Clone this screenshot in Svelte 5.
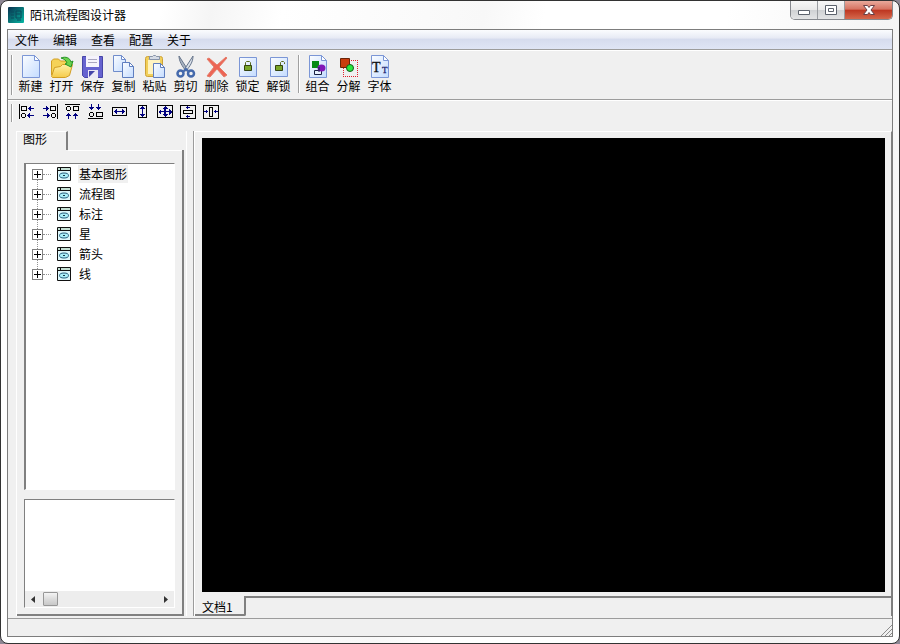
<script lang="ts">
	type Tool = { icon: string; label: string };

	const menus = ['文件', '编辑', '查看', '配置', '关于'];

	const editTools: Tool[] = [
		{ icon: 'new', label: '新建' },
		{ icon: 'open', label: '打开' },
		{ icon: 'save', label: '保存' },
		{ icon: 'copy', label: '复制' },
		{ icon: 'paste', label: '粘贴' },
		{ icon: 'cut', label: '剪切' },
		{ icon: 'delete', label: '删除' },
		{ icon: 'lock', label: '锁定' },
		{ icon: 'unlock', label: '解锁' }
	];
	const shapeTools: Tool[] = [
		{ icon: 'group', label: '组合' },
		{ icon: 'ungroup', label: '分解' },
		{ icon: 'font', label: '字体' }
	];
	const alignTools: Tool[] = [
		{ icon: 'left', label: '左对齐' },
		{ icon: 'right', label: '右对齐' },
		{ icon: 'top', label: '顶端对齐' },
		{ icon: 'bottom', label: '底端对齐' },
		{ icon: 'width', label: '等宽' },
		{ icon: 'height', label: '等高' },
		{ icon: 'size', label: '等大小' },
		{ icon: 'middle', label: '垂直居中' },
		{ icon: 'center', label: '水平居中' }
	];

	const categories = ['基本图形', '流程图', '标注', '星', '箭头', '线'];
	let selected = $state('基本图形');
</script>

{#snippet toolButton(tool: Tool)}
	<button class="tool">
		<svg width="24" height="24" viewBox="0 0 24 24" aria-hidden="true">
			{#if tool.icon === 'new'}
				<path d="M3.5 .5h12l5 5v17h-17z" fill="url(#paper)" stroke="#7b96d6" />
				<path d="M15.5 .5v5h5z" fill="#fff" stroke="#7b96d6" />
			{:else if tool.icon === 'open'}
				<path d="M1.5 20V6l2-2h5l2 2h6l2 2v4" fill="#f5d257" stroke="#d29e23" />
				<path d="M1.5 21.5l3-9 6-1 2-2h10l-3 11-4 2h-13z" fill="url(#folder)" stroke="#d29e23" />
				<path d="M11 3c5-2 9 0 10 4l2-1-2 6-6-3 2-1c-1-3-3-4-6-5z" fill="#6bd24c" stroke="#249326" />
			{:else if tool.icon === 'save'}
				<path d="M1.5 1.5h20v21h-18l-2-2z" fill="#6663cf" stroke="#4746a8" />
				<path d="M5 1h13v11H5z" fill="#f5f3fc" />
				<path d="M7 4.5h9M7 7.5h9" stroke="#aaa6c0" />
				<path d="M7 15h10v8H7z" fill="#ece9f4" />
				<path d="M8 22v-6h6z" fill="#4545a8" />
			{:else if tool.icon === 'copy'}
				<path d="M1.5 .5h8l4 4v12h-12z" fill="url(#paper)" stroke="#6f8ccb" />
				<path d="M9.5 .5v4h4z" fill="#fff" stroke="#6f8ccb" />
				<path d="M10.5 7.5h7l4 4v11h-11z" fill="url(#paper)" stroke="#5f7ebf" />
				<path d="M17.5 7.5v4h4z" fill="#fff" stroke="#5f7ebf" />
			{:else if tool.icon === 'paste'}
				<rect x="2.5" y="1.5" width="17" height="20" rx="2" fill="#f1cf59" stroke="#cda238" />
				<path d="M5 5h12v14H5z" fill="#fff3c0" />
				<path d="M6.5 4.5v-3h3l1-1h2l1 1h3v3z" fill="#d5dbe5" stroke="#8794ab" />
				<path d="M10.5 8.5h7l4 4v10h-11z" fill="url(#paper)" stroke="#5f7ebf" />
				<path d="M17.5 8.5v4h4z" fill="#fff" stroke="#5f7ebf" />
			{:else if tool.icon === 'cut'}
				<path d="M5 1l9 14-2 1C8 11 5 6 5 1z" fill="#a8b3c2" stroke="#66758b" />
				<path d="M19 1l-9 14 2 1c4-5 7-9 7-15z" fill="#d9e0e9" stroke="#66758b" />
				<circle cx="6.5" cy="18.5" r="3" fill="none" stroke="#456aac" stroke-width="2.5" />
				<circle cx="17" cy="18.5" r="3" fill="none" stroke="#456aac" stroke-width="2.5" />
				<path d="M9 17l3-3 3 3" fill="none" stroke="#456aac" stroke-width="2" />
			{:else if tool.icon === 'delete'}
				<path d="M2 4l2-1 8 7 9-8 1 1-8 9 8 8-3 2-7-8-7 8-3-1 7-9z" fill="#ed6454" stroke="#e47e6b" />
			{:else if tool.icon === 'lock' || tool.icon === 'unlock'}
				<path d="M3.5 2.5h17v19h-17z" fill="url(#paper)" stroke="#7b96d6" />
				<path d="M8.5 10.5h7v5h-7z" fill="#78a62b" stroke="#344411" />
				{#if tool.icon === 'lock'}
					<path d="M9.5 10V7.5l1-1h3l1 1V10" fill="none" stroke="#5d6d22" />
				{:else}
					<path d="M13.5 10V7.5l1-1h2l1 1V9" fill="none" stroke="#5d6d22" />
				{/if}
			{:else if tool.icon === 'group'}
				<path d="M3.5 .5h12l5 5v17h-17z" fill="url(#paper)" stroke="#7b96d6" />
				<path d="M15.5 .5v5h5z" fill="#fff" stroke="#7b96d6" />
				<path d="M8.5 15.5h7v4h-7z" fill="#e8f1ff" stroke="#182043" />
				<path d="M6 6h7v7H6z" fill="#078a16" />
				<ellipse cx="15.5" cy="13" rx="4" ry="3.5" fill="#8118b6" />
				<path d="M13 12v5" stroke="#182043" />
			{:else if tool.icon === 'ungroup'}
				<path d="M6 5.5h15M6 21.5h15M6.5 5v17M20.5 5v17" fill="none" stroke="#e0202c" stroke-dasharray="1 1" shape-rendering="crispEdges" />
				<path d="M3.5 3.5h9v9h-9z" fill="#c93d0e" stroke="#692408" />
				<circle cx="13" cy="13" r="3.5" fill="#29e83e" stroke="#125a1a" />
			{:else}
				<path d="M3.5 .5h12l5 5v17h-17z" fill="url(#paper)" stroke="#7b96d6" />
				<path d="M15.5 .5v5h5z" fill="#fff" stroke="#7b96d6" />
				<text x="4" y="17" class="glyph big">T</text>
				<text x="14" y="18" class="glyph">T</text>
			{/if}
		</svg>
		<span>{tool.label}</span>
	</button>
{/snippet}

{#snippet alignButton(tool: Tool)}
	<button class="align" title={tool.label} aria-label={tool.label}>
		<svg width="16" height="16" viewBox="0 0 16 16" shape-rendering="crispEdges" aria-hidden="true">
			{#if tool.icon === 'left'}
				<path class="ink" d="M.5 0v15M2.5 2.5h5v4h-5zM3.5 9.5h2l1 1v2l-1 1h-2l-1-1v-2z" />
				<path class="navy" d="M9 4h1V3h1V2h1v2h3v1h-3v2h-1V6h-1V5H9zM8 11h1v-1h1V9h1v2h4v1h-4v2h-1v-1H9v-1H8z" />
			{:else if tool.icon === 'right'}
				<path class="ink" d="M15.5 0v15M8.5 2.5h5v4h-5zM10.5 9.5h2l1 1v2l-1 1h-2l-1-1v-2z" />
				<path class="navy" d="M7 4H6V3H5V2H4v2H1v1h3v2h1V6h1V5h1zM8 11H7v-1H6V9H5v2H1v1h4v2h1v-1h1v-1h1z" />
			{:else if tool.icon === 'top'}
				<path class="ink" d="M0 .5h15M8.5 2.5h5v4h-5zM2.5 2.5h2l1 1v2l-1 1h-2l-1-1v-2z" />
				<path class="navy" d="M3 9h1v1h1v1h1v1H4v3H3v-3H1v-1h1v-1h1zM10 9h1v1h1v1h1v1h-2v3h-1v-3H8v-1h1v-1h1z" />
			{:else if tool.icon === 'bottom'}
				<path class="ink" d="M0 14.5h15M8.5 8.5h6v4h-6zM2.5 8.5h2l1 1v2l-1 1h-2l-1-1v-2z" />
				<path class="navy" d="M3 0h1v3h2v1H5v1H4v1H3V5H2V4H1V3h2zM10 0h1v3h2v1h-1v1h-1v1h-1V5H9V4H8V3h2z" />
			{:else if tool.icon === 'width'}
				<path class="ink" d="M1.5 3.5h14v8h-14z" />
				<path class="navy" d="M3 7h1V6h1V5h1v2h5V5h1v1h1v1h1v1h-1v1h-1v1h-1V8H6v2H5V9H4V8H3z" />
			{:else if tool.icon === 'height'}
				<path class="ink" d="M4.5 1.5h8v12h-8z" />
				<path class="navy" d="M8 2h1v1h1v1h1v1H9v5h2v1h-1v1H9v1H8v-1H7v-1H6v-1h2V5H6V4h1V3h1z" />
			{:else if tool.icon === 'size'}
				<path class="ink" d="M.5 1.5h15v12H.5z" />
				<path class="navy" d="M8 2l3 3H9v2h3V5l3 3-3 3V8H9v2h2l-3 3-3-3h2V8H4v3L1 8l3-3v2h3V5H5z" />
			{:else if tool.icon === 'middle'}
				<path class="ink" d="M.5 1.5h15v13H.5zM3.5 6.5h9v3h-9z" />
				<path class="navy" d="M7 2h1v1h2v1H8v1H7V4H6V3h1zM7 11h1v1h2v1H8v1H7v-1H6v-1h1z" />
			{:else}
				<path class="ink" d="M.5 1.5h15v13H.5zM6.5 3.5h3v9h-3z" />
				<path class="navy" d="M1 7h2V6h1v1h1v1H4v1H3V8H1zM15 7h-2V6h-1v1h-1v1h1v1h1V8h2z" />
			{/if}
		</svg>
	</button>
{/snippet}

<svg class="defs" width="0" height="0" aria-hidden="true">
	<defs>
		<linearGradient id="paper" x1="0" y1="0" x2="1" y2="1">
			<stop offset="0" stop-color="#fbfdff" />
			<stop offset="1" stop-color="#c4dcff" />
		</linearGradient>
		<linearGradient id="folder" x1="0" y1="0" x2="0" y2="1">
			<stop offset="0" stop-color="#fff0a4" />
			<stop offset="1" stop-color="#f5cb4a" />
		</linearGradient>
		<linearGradient id="logo" x1="0" y1="0" x2="1" y2="1">
			<stop offset="0" stop-color="#092f50" />
			<stop offset="0.5" stop-color="#087577" />
			<stop offset="1" stop-color="#06b7a5" />
		</linearGradient>
	</defs>
</svg>

<div class="window">
	<header class="titlebar">
		<svg width="16" height="16" viewBox="0 0 16 16" aria-hidden="true">
			<rect width="16" height="16" rx="1" fill="url(#logo)" />
			<path d="M3 5h3M3 8h3M3 11h3M8 4h5v7H8zM8 7h4M9 13h4" fill="none" stroke="#0a4a5c" />
		</svg>
		<h1>陌讯流程图设计器</h1>
		<div class="controls">
			<button class="min" aria-label="最小化">
				<svg width="14" height="12" viewBox="0 0 14 12"><path d="M1.5 6.5h11v4h-11z" fill="#fff" stroke="#5c626c" /></svg>
			</button>
			<button class="max" aria-label="最大化">
				<svg width="14" height="12" viewBox="0 0 14 12"><path d="M1.5 1.5h11v9h-11zM4.5 4.5h5v3h-5z" fill="#fff" stroke="#5c626c" /></svg>
			</button>
			<button class="close" aria-label="关闭">
				<svg width="14" height="12" viewBox="0 0 14 12"><path d="M1.5 1.5h4L7 3.5l1.5-2h4L9 6l3.5 4.5h-4L7 8.5l-1.5 2h-4L5 6z" fill="#fff" stroke="#6a4146" /></svg>
			</button>
		</div>
	</header>

	<div class="client">
		<nav class="menubar">
			{#each menus as menu}
				<button>{menu}</button>
			{/each}
		</nav>

		<div class="toolbar main-tools">
			<span class="grip"></span>
			{#each editTools as tool}
				{@render toolButton(tool)}
			{/each}
			<span class="separator"></span>
			{#each shapeTools as tool}
				{@render toolButton(tool)}
			{/each}
		</div>

		<div class="toolbar align-tools">
			<span class="grip"></span>
			{#each alignTools as tool}
				{@render alignButton(tool)}
			{/each}
		</div>

		<div class="workspace">
			<aside class="sidebar">
				<div class="side-tabs">
					<button class="side-tab">图形</button>
				</div>
				<div class="side-panel">
					<ul class="tree">
						{#each categories as name (name)}
							<li>
								<button class="expander" aria-label="展开 {name}"></button>
								<span class="branch"></span>
								<svg width="14" height="14" viewBox="0 0 14 14" aria-hidden="true">
									<path d="M.5 .5h13v13H.5z" fill="#ddf8fc" stroke="#111" />
									<path d="M1 1h12v2H1z" fill="#c4e0d4" />
									<path d="M1 3.5h12M3.5 1v2" stroke="#111" />
									<ellipse cx="7" cy="8.5" rx="4.5" ry="2.5" fill="#aaf0fa" stroke="#235d7c" />
									<path d="M6 8.5h2" stroke="#173448" />
								</svg>
								<button class="node" class:selected={selected === name} onclick={() => (selected = name)}>{name}</button>
							</li>
						{/each}
					</ul>
					<div class="preview">
						<div class="preview-body"></div>
						<div class="scrollbar">
							<button class="arrow" aria-label="向左滚动"><svg width="5" height="7" viewBox="0 0 5 7"><path d="M4 0v7L0 3.5z" fill="#333" /></svg></button>
							<span class="thumb"></span>
							<button class="arrow next" aria-label="向右滚动"><svg width="5" height="7" viewBox="0 0 5 7"><path d="M1 0v7l4-3.5z" fill="#333" /></svg></button>
						</div>
					</div>
				</div>
			</aside>

			<div class="splitter"></div>

			<main class="document">
				<div class="canvas"></div>
				<div class="doc-tabs">
					<button class="doc-tab">文档1</button>
					<span class="tab-rest"></span>
				</div>
			</main>
		</div>

		<footer class="statusbar">
			<svg width="12" height="12" viewBox="0 0 12 12" aria-hidden="true">
				<path d="M1 12L12 1M5 12l7-7M9 12l3-3" stroke="#8c8c8c" />
			</svg>
		</footer>
	</div>
</div>

<style>
	:global(body) {
		margin: 0;
		background: #8d8794;
	}
	.window, .window * {
		box-sizing: border-box;
	}
	.defs {
		position: absolute;
	}
	.window {
		height: 100vh;
		display: flex;
		flex-direction: column;
		padding: 0 6px 6px;
		border: 1px solid #333;
		border-radius: 8px;
		background: linear-gradient(100deg, #fff 0, #fff 16%, #f5f5f5 21%, #fff 28%, #f8f8f8 48%, #fff 54%, #fff 72%, #f4f4f4 88%, #fff 100%);
		font: 12px/14px "Noto Sans CJK SC", sans-serif;
		color: #000;
	}
	button {
		padding: 0;
		border: 0;
		background: none;
		font: inherit;
		color: inherit;
	}
	svg {
		display: block;
		flex: none;
	}

	/* title bar */
	.titlebar {
		display: flex;
		align-items: center;
		height: 28px;
		flex: none;
		padding-left: 1px;
	}
	h1 {
		margin: 0 0 0 6px;
		font-size: 12px;
		font-weight: 400;
		line-height: 16px;
	}
	.controls {
		display: flex;
		align-self: flex-start;
		margin-left: auto;
		height: 19px;
		border: 1px solid #85888d;
		border-top: 0;
		border-radius: 0 0 5px 5px;
		overflow: hidden;
	}
	.controls button {
		display: flex;
		align-items: center;
		justify-content: center;
		width: 27px;
		background: linear-gradient(#f7f7f7 0, #e9e9e9 48%, #cfd1d3 50%, #e3e4e5 100%);
		border-right: 1px solid #9a9da1;
	}
	.controls .close {
		width: 47px;
		border-right: 0;
		background: linear-gradient(#e9a99b 0, #d67361 46%, #bd3520 50%, #d5694d 100%);
	}

	.client {
		flex: 1;
		min-height: 0;
		display: flex;
		flex-direction: column;
		border: 1px solid #7d7d7d;
		background: #f0f0f0;
	}
	.menubar {
		display: flex;
		flex: none;
		height: 20px;
		padding-left: 7px;
		gap: 14px;
		border-bottom: 1px solid #9c9c9c;
		background: linear-gradient(#fbfcfe 0, #e8ebf5 40%, #d6dcee 50%, #dfe5f5 100%);
	}

	/* toolbars */
	.toolbar {
		display: flex;
		flex: none;
		padding-left: 3px;
		border-top: 1px solid #fff;
	}
	.main-tools {
		height: 50px;
		padding-top: 4px;
		border-bottom: 1px solid #9c9c9c;
	}
	.align-tools {
		height: 30px;
		padding-top: 3px;
	}
	.grip {
		width: 2px;
		height: 40px;
		margin-right: 2px;
		border-left: 1px solid #9c9c9c;
		border-right: 1px solid #fff;
	}
	.align-tools .grip {
		height: 18px;
	}
	.separator {
		width: 2px;
		height: 38px;
		margin: 0 2px 0 4px;
		border-left: 1px solid #a0a0a0;
		border-right: 1px solid #fff;
	}
	.tool {
		display: flex;
		flex-direction: column;
		align-items: center;
		width: 31px;
		height: 38px;
		white-space: nowrap;
	}
	.align {
		display: flex;
		align-items: center;
		justify-content: center;
		width: 23px;
		height: 16px;
	}
	.glyph {
		font: 9px "Liberation Serif", serif;
		fill: #1c2470;
		stroke: #1c2470;
		stroke-width: 0.3px;
	}
	.glyph.big {
		font-size: 14px;
		fill: #111;
		stroke: #111;
	}
	.ink {
		fill: none;
		stroke: #000;
	}
	.navy {
		fill: #000080;
	}

	/* body */
	.workspace {
		flex: 1;
		min-height: 0;
		display: flex;
		padding: 1px 0 2px 8px;
	}
	.sidebar {
		width: 168px;
		flex: none;
		display: flex;
		flex-direction: column;
		border-left: 1px solid #fff;
	}
	.side-tabs {
		display: flex;
		height: 19px;
		flex: none;
	}
	.side-tab {
		width: 51px;
		padding: 0 0 4px 6px;
		text-align: left;
		border-top: 1px solid #fff;
		border-right: 2px solid #808080;
	}
	.side-panel {
		flex: 1;
		min-height: 0;
		display: flex;
		flex-direction: column;
		gap: 9px;
		padding: 13px 7px 6px;
		border-right: 2px solid #808080;
		border-bottom: 2px solid #808080;
		background: linear-gradient(#fff, #fff) 51px 0 / 100% 1px no-repeat;
	}
	.tree {
		flex: 1;
		margin: 0;
		padding: 0 0 0 6px;
		list-style: none;
		background: #fff;
		border: 1px solid #fff;
		border-top-color: #808080;
		border-left: 2px solid #808080;
	}
	.tree li {
		display: flex;
		align-items: center;
		height: 20px;
		background: repeating-linear-gradient(#909090 0 1px, #fff 1px 2px) 5px 0 / 1px 100% no-repeat;
	}
	.tree li:first-child {
		background-position: 5px 10px;
	}
	.tree li:last-child {
		background-size: 1px 10px;
	}
	.expander {
		width: 11px;
		height: 11px;
		border: 1px solid #808080;
		background:
			linear-gradient(#000, #000) center / 7px 1px no-repeat,
			linear-gradient(#000, #000) center / 1px 7px no-repeat,
			#fff;
	}
	.branch {
		width: 8px;
		margin-right: 6px;
		border-top: 1px dotted #909090;
	}
	.node {
		height: 18px;
		margin-left: 7px;
		padding: 0 1px;
	}
	.node.selected {
		background: #f0f0f0;
	}
	.preview {
		height: 109px;
		flex: none;
		display: flex;
		flex-direction: column;
		background: #fff;
		border: 1px solid #fff;
		border-top-color: #808080;
		border-left-color: #808080;
	}
	.preview-body {
		flex: 1;
	}
	.scrollbar {
		display: flex;
		height: 16px;
		background: #ededed;
	}
	.arrow {
		display: flex;
		align-items: center;
		justify-content: center;
		width: 17px;
	}
	.arrow.next {
		margin-left: auto;
	}
	.thumb {
		width: 15px;
		margin: 1px;
		border: 1px solid #979797;
		border-radius: 1px;
		background: linear-gradient(#f4f4f4, #dcdcdc 50%, #c8c8c8);
	}
	.splitter {
		width: 8px;
		flex: none;
		margin-left: 2px;
		border-left: 1px solid #fff;
		border-right: 1px solid #9c9c9c;
	}
	.document {
		flex: 1;
		min-width: 0;
		display: flex;
		flex-direction: column;
		border-left: 1px solid #fff;
		border-top: 1px solid #fff;
		border-right: 1px solid #808080;
	}
	.canvas {
		flex: 1;
		margin: 6px 6px 4px 7px;
		background: #000;
	}
	.doc-tabs {
		display: flex;
		height: 20px;
		flex: none;
	}
	.doc-tab {
		width: 51px;
		padding: 4px 0 0 7px;
		text-align: left;
		border-right: 2px solid #808080;
		border-bottom: 2px solid #808080;
		border-radius: 0 0 2px 0;
	}
	.tab-rest {
		flex: 1;
		border-top: 2px solid #808080;
	}
	.statusbar {
		display: flex;
		flex: none;
		align-items: flex-end;
		justify-content: flex-end;
		height: 18px;
		border-top: 1px solid #9c9c9c;
	}
</style>
